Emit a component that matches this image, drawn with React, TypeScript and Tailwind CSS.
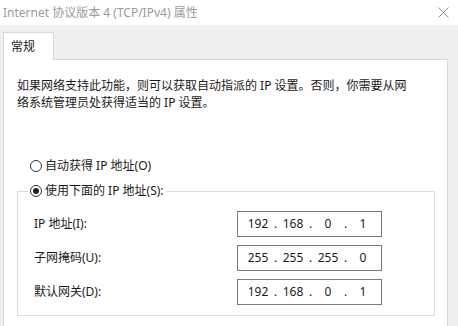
import React from "react";

const font = { fontFamily: '"Noto Sans", "Noto Sans CJK SC", sans-serif' };

function Radio({ checked }: { checked?: boolean }) {
  return (
    <span className="w-[12px] h-[12px] rounded-full border border-[#333] bg-white flex items-center justify-center shrink-0">
      {checked && <span className="w-[6px] h-[6px] rounded-full bg-[#222]" />}
    </span>
  );
}

function IpBox({ parts }: { parts: string[] }) {
  return (
    <div className="ml-auto mr-[52px] w-[145px] h-[26px] border border-[#7a7a7a] bg-white flex items-center pl-[7px] text-[12px] text-[#1a1a1a]">
      {parts.map((p, i) => (
        <React.Fragment key={i}>
          <span className="w-[26px] text-center">{p}</span>
          {i < 3 && <span className="w-[9px] text-center">.</span>}
        </React.Fragment>
      ))}
    </div>
  );
}

const rows = [
  { label: "IP 地址(I):", parts: ["192", "168", "0", "1"] },
  { label: "子网掩码(U):", parts: ["255", "255", "255", "0"] },
  { label: "默认网关(D):", parts: ["192", "168", "0", "1"] },
];

export default function App() {
  return (
    <div style={font} className="w-[458px] h-[326px] overflow-hidden bg-[#f0f0f0] text-[#1a1a1a]">
      <div className="h-[25px] bg-white flex items-center justify-between pl-[3px] pr-[9px]">
        <span className="text-[12px] text-[#9b9b9b]">Internet 协议版本 4 (TCP/IPv4) 属性</span>
        <svg width="11" height="11" viewBox="0 0 11 11">
          <path d="M0.5 0.5L10.5 10.5M10.5 0.5L0.5 10.5" stroke="#8a8a8a" strokeWidth="1" />
        </svg>
      </div>
      <div className="pl-[3px] pr-[10px] pt-[7px]">
        <div className="relative z-10 -mb-px w-[51px] h-[28px] bg-white border border-b-0 border-[#d9d9d9] flex items-center pl-[7px] text-[12px]">
          常规
        </div>
        <div className="bg-white border border-[#d9d9d9] h-[300px] pl-[13px] pt-[17px]">
          <p className="text-[12px] leading-[17px] w-[400px]">
            如果网络支持此功能，则可以获取自动指派的 IP 设置。否则，你需要从网络系统管理员处获得适当的 IP 设置。
          </p>
          <div className="mt-[45px] ml-[13px] flex items-center gap-[3px] text-[12px] h-[20px]">
            <Radio />
            <span>自动获得 IP 地址(O)</span>
          </div>
          <fieldset className="mt-[7px] w-[418px] border border-[#dcdcdc]">
            <legend className="ml-[10px] px-[2px] flex items-center gap-[3px] text-[12px] h-[16px]">
              <Radio checked />
              <span>使用下面的 IP 地址(S):</span>
            </legend>
            <div className="flex flex-col gap-[8px] pl-[16px] pt-[12px] pb-[10px]">
              {rows.map((r) => (
                <div key={r.label} className="flex items-center h-[26px] text-[12px]">
                  <span>{r.label}</span>
                  <IpBox parts={r.parts} />
                </div>
              ))}
            </div>
          </fieldset>
        </div>
      </div>
    </div>
  );
}
